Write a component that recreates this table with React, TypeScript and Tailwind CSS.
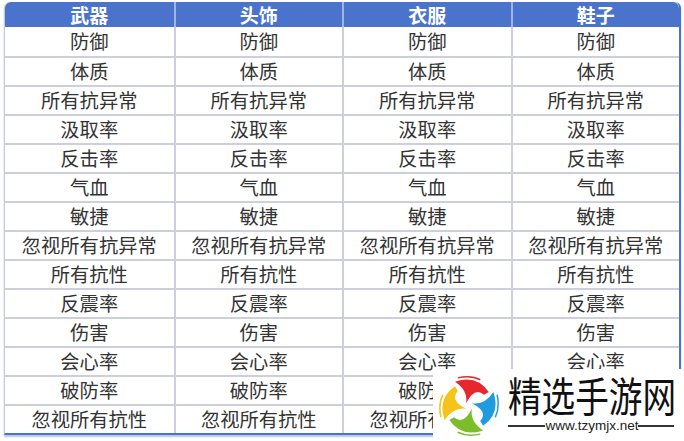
import React from 'react';

const headers = ['武器', '头饰', '衣服', '鞋子'];
const stats = [
  '防御',
  '体质',
  '所有抗异常',
  '汲取率',
  '反击率',
  '气血',
  '敏捷',
  '忽视所有抗异常',
  '所有抗性',
  '反震率',
  '伤害',
  '会心率',
  '破防率',
  '忽视所有抗性',
];

// pinwheel logo, one blade drawn then rotated
function Logo() {
  const blade =
    'M -15 -26 Q 8 -34 21 -15 L 16 -12 Q 6 -21 -3 -3 Q -1 -17 -15 -26 Z';
  const colors = ['#e8262d', '#1f9be0', '#7cbd2c', '#f6c318'];
  return (
    <svg width="60" height="64" viewBox="-32 -32 64 64">
      {colors.map((c, i) => (
        <g key={c} transform={`rotate(${i * 90})`}>
          <path d={blade} fill={c} />
          <path d="M -12 -30 Q 2 -33 12 -28" stroke={c} strokeWidth="1.6" fill="none" />
        </g>
      ))}
    </svg>
  );
}

export default function App() {
  return (
    <div
      className="relative w-[684px] h-[441px] overflow-hidden bg-white"
      style={{ fontFamily: '"Noto Sans CJK SC", "Noto Sans", sans-serif' }}
    >
      <div className="ml-[4px] mt-[2px] w-[677px] rounded-t-[6px] border-l border-[#c6c9d6] border-r-2 border-r-[#4a74cc] border-b-2 border-b-[#4a74cc] shadow-[0_2px_2px_rgba(60,90,160,0.35)]">
        {/* header */}
        <div className="grid grid-cols-4 h-[25px] bg-[#4a74cc] rounded-t-[6px] text-white font-bold text-[19px] leading-none">
          {headers.map((h, i) => (
            <div
              key={h}
              className={`flex items-center justify-center ${i > 0 ? 'border-l-2 border-[#9db6ea]' : ''}`}
            >
              {h}
            </div>
          ))}
        </div>
        {/* body */}
        {stats.map((s, r) => (
          <div
            key={s}
            className={`grid grid-cols-4 h-[29px] text-[19.3px] text-[#333] leading-none ${r > 0 ? 'border-t-2 border-[#cdd0dc]' : ''}`}
          >
            {headers.map((h, i) => (
              <div
                key={h}
                className={`flex items-center justify-center ${i > 0 ? 'border-l-2 border-[#cdd0dc]' : ''}`}
              >
                {s}
              </div>
            ))}
          </div>
        ))}
      </div>

      {/* watermark */}
      <div className="absolute left-[433px] top-[369px] w-[251px] h-[72px] bg-white flex items-start">
        <div className="ml-[6px] mt-[5px]">
          <Logo />
        </div>
        <div className="ml-[9px] mt-[1px] w-[166px] flex flex-col">
          <div className="origin-left scale-x-82 whitespace-nowrap text-[41px] leading-[48px] text-[#111]">
            精选手游网
          </div>
          <div className="flex items-center justify-between">
            <span className="block w-[40px] h-[2px] bg-[#333]" />
            <span className="text-[13.5px] leading-[16px] text-[#222]" style={{ fontFamily: '"Liberation Sans", sans-serif' }}>
              www.tzymjx.net
            </span>
            <span className="block w-[38px] h-[2px] bg-[#333]" />
          </div>
        </div>
      </div>
    </div>
  );
}
